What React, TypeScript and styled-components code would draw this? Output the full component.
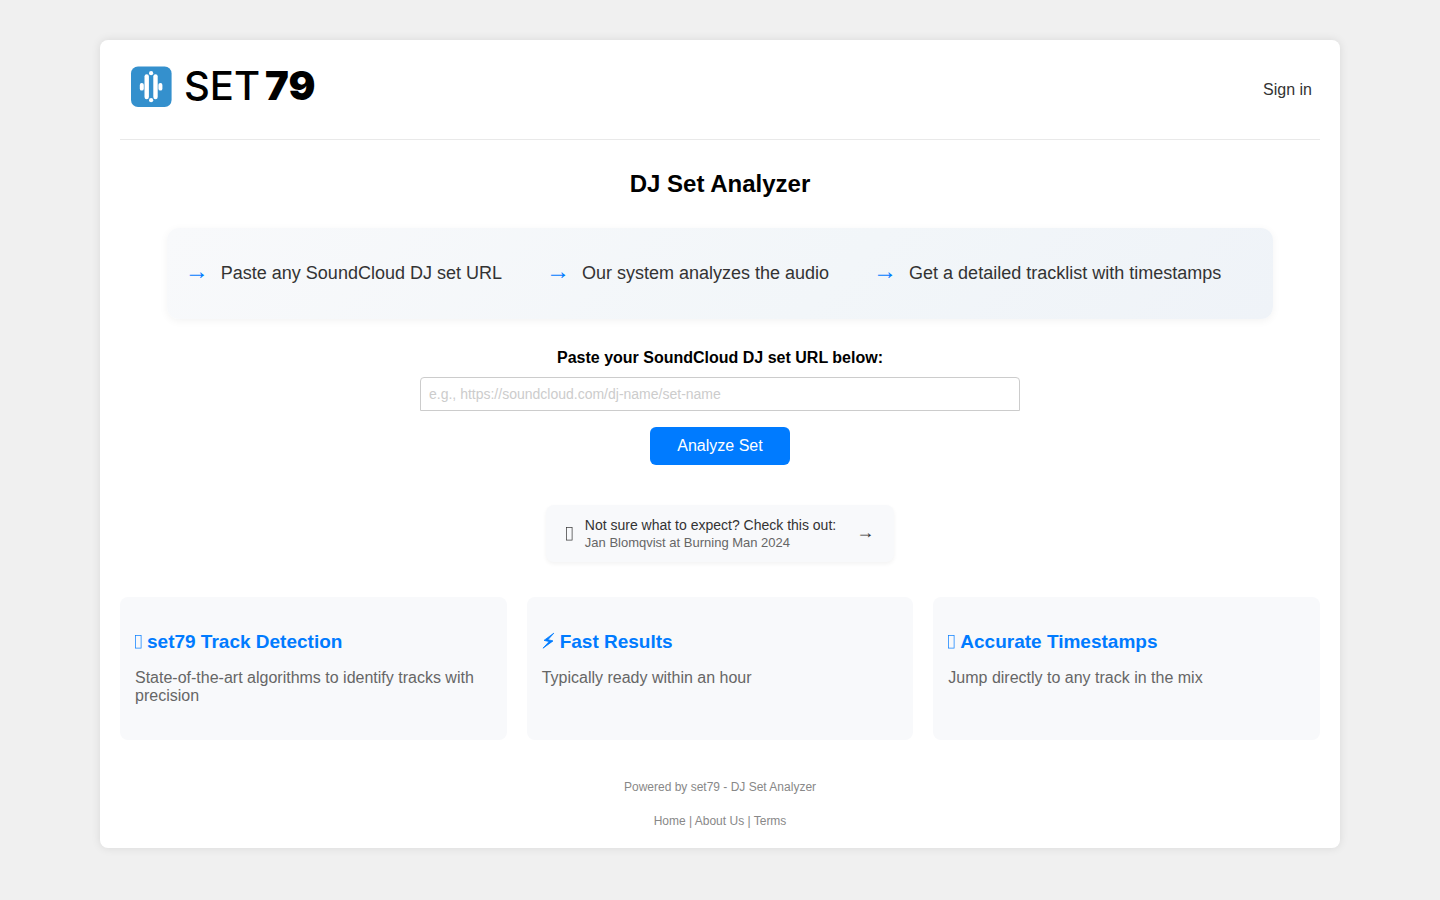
import React from "react";
import styled, { createGlobalStyle } from "styled-components";

const GlobalStyle = createGlobalStyle`
  * { box-sizing: border-box; }
  body {
    margin: 0;
    background: #f0f0f0;
    color: #000;
    font-family: "Liberation Sans", Arial, sans-serif;
    font-size: 16px;
    line-height: 18px;
  }
`;

const Page = styled.div`
  padding: 40px 20px;
`;

const Container = styled.div`
  max-width: 1240px;
  margin: 0 auto;
  padding: 20px;
  background: #fff;
  border-radius: 8px;
  box-shadow: 0 0 10px rgba(0, 0, 0, 0.1);
`;

const Header = styled.header`
  display: flex;
  align-items: center;
  justify-content: space-between;
  height: 80px;
  padding: 0 8px 20px;
  border-bottom: 1px solid #e9e9e9;
`;

const LogoLink = styled.a`
  display: flex;
  align-items: center;
  gap: 12px;
  height: 54px;
  padding: 0 2px;
  margin-bottom: 6px;
  color: #000;
  text-decoration: none;
`;

const LogoMark = styled.svg`
  width: 42px;
  height: 42px;
`;

const Wordmark = styled.span`
  display: flex;
  gap: 5px;
  padding-bottom: 2px;
  font-family: Inter, sans-serif;
  font-size: 40px;
  line-height: 40px;
  font-weight: 500;
  font-optical-sizing: none;

  strong { font-weight: 900; }
`;

const SignIn = styled.a`
  color: #333;
  text-decoration: none;
`;

const Title = styled.h1`
  margin: 30px 0;
  font-size: 24px;
  line-height: 28px;
  text-align: center;
`;

const Steps = styled.ul`
  display: flex;
  flex-wrap: wrap;
  gap: 16px 44px;
  width: fit-content;
  margin: 0 auto 30px;
  padding: 29px 52px 31px 18px;
  list-style: none;
  border-radius: 12px;
  background: linear-gradient(135deg, #f8f9fb 0%, #f2f6f9 60%, #eff3f8 100%);
  box-shadow: 0 2px 8px rgba(0, 0, 0, 0.05);
`;

const Step = styled.li`
  display: flex;
  align-items: center;
  gap: 12px;
  height: 31px;
  color: #333;
  font-size: 18px;
`;

const StepArrow = styled.span`
  padding-bottom: 4px;
  color: #007bff;
  font-size: 24px;
`;

const Form = styled.form`
  display: flex;
  flex-direction: column;
  align-items: center;
`;

const UrlLabel = styled.label`
  margin-bottom: 10px;
  font-weight: bold;
`;

const UrlInput = styled.input`
  width: 100%;
  max-width: 600px;
  height: 34px;
  margin-bottom: 16px;
  padding: 8px;
  border: 1px solid #ccc;
  border-radius: 4px 4px 0 0;
  font-family: inherit;
  font-size: 14px;

  &::placeholder { color: #ccc; }
`;

const SubmitButton = styled.button`
  width: 140px;
  height: 38px;
  padding: 0;
  border: 0;
  border-radius: 6px;
  background: #007bff;
  color: #fff;
  font-family: inherit;
  font-size: 16px;
  cursor: pointer;
`;

const ExampleLink = styled.a`
  display: flex;
  align-items: center;
  width: fit-content;
  margin: 40px auto 35px;
  padding: 11px 20px 10px;
  border-radius: 8px;
  background: #f8f9fb;
  box-shadow: 0 2px 4px rgba(0, 0, 0, 0.05);
  color: #333;
  text-decoration: none;
`;

const ExampleText = styled.span`
  display: flex;
  flex-direction: column;
  margin: 0 20px 0 12px;
  font-size: 14px;

  small {
    color: #666;
    font-size: 13px;
  }
`;

const ExampleArrow = styled.span`
  height: 22px;
  font-size: 18px;
`;

const Features = styled.section`
  display: grid;
  grid-template-columns: repeat(auto-fit, minmax(250px, 1fr));
  gap: 20px;
`;

const Feature = styled.article`
  min-height: 143px;
  padding: 34px 15px;
  border-radius: 8px;
  background: #f8f9fb;
`;

const FeatureTitle = styled.h2`
  display: flex;
  align-items: center;
  gap: 5px;
  margin: 0 0 16px;
  color: #007bff;
  font-size: 19px;
  line-height: 22px;
`;

const FeatureText = styled.p`
  margin: 0;
  color: #666;
`;

const Footer = styled.footer`
  margin-top: 40px;
  color: #888;
  font-size: 12px;
  line-height: 14px;
  text-align: center;

  p { margin: 0; }
  nav { margin-top: 20px; }
  a { color: inherit; text-decoration: none; }
`;

const BoxIcon = () => (
  <svg width="7" height="14" viewBox="0 0 7 14" aria-hidden="true">
    <rect x="0.5" y="0.5" width="5.6" height="12.6" fill="none" stroke="currentColor" strokeWidth="0.7" />
  </svg>
);

const BoltIcon = () => (
  <svg width="13" height="20" viewBox="0 0 13 20" aria-hidden="true">
    <path
      d="M11.8 1.2 L2 8.4 L7.2 9.5 L1 16.2 L11 8.9 L5.9 7.7 Z"
      fill="currentColor"
      stroke="currentColor"
      strokeWidth="0.8"
    />
  </svg>
);

const steps = [
  "Paste any SoundCloud DJ set URL",
  "Our system analyzes the audio",
  "Get a detailed tracklist with timestamps",
];

const features = [
  { Icon: BoxIcon, title: "set79 Track Detection", text: "State-of-the-art algorithms to identify tracks with precision" },
  { Icon: BoltIcon, title: "Fast Results", text: "Typically ready within an hour" },
  { Icon: BoxIcon, title: "Accurate Timestamps", text: "Jump directly to any track in the mix" },
];

export default function App() {
  return (
    <>
      <GlobalStyle />
      <Page>
        <Container>
          <Header>
            <LogoLink href="#home">
              <LogoMark viewBox="0 0 42 42" aria-hidden="true">
                <rect x="1" y="0.5" width="40.6" height="40.6" rx="7" fill="#3490cd" />
                <g fill="#fff">
                  <rect x="14.5" y="8.3" width="4.4" height="25" rx="2.2" />
                  <rect x="23.3" y="8.3" width="4.4" height="25" rx="2.2" />
                  <rect x="9.8" y="17" width="4" height="7.6" rx="1.9" />
                  <rect x="28.4" y="17" width="4" height="7.6" rx="1.9" />
                  <circle cx="21.1" cy="7.2" r="2.1" />
                  <circle cx="21.1" cy="34.2" r="2.1" />
                </g>
              </LogoMark>
              <Wordmark>SET<strong>79</strong></Wordmark>
            </LogoLink>
            <SignIn href="#sign-in">Sign in</SignIn>
          </Header>

          <main>
            <Title>DJ Set Analyzer</Title>
            <Steps>
              {steps.map((step) => (
                <Step key={step}>
                  <StepArrow aria-hidden="true">→</StepArrow>
                  {step}
                </Step>
              ))}
            </Steps>

            <Form onSubmit={(event) => event.preventDefault()}>
              <UrlLabel htmlFor="set-url">Paste your SoundCloud DJ set URL below:</UrlLabel>
              <UrlInput id="set-url" type="url" placeholder="e.g., https://soundcloud.com/dj-name/set-name" />
              <SubmitButton type="submit">Analyze Set</SubmitButton>
            </Form>

            <ExampleLink href="#example">
              <BoxIcon />
              <ExampleText>
                Not sure what to expect? Check this out:
                <small>Jan Blomqvist at Burning Man 2024</small>
              </ExampleText>
              <ExampleArrow aria-hidden="true">→</ExampleArrow>
            </ExampleLink>

            <Features>
              {features.map(({ Icon, title, text }) => (
                <Feature key={title}>
                  <FeatureTitle>
                    <Icon />
                    {title}
                  </FeatureTitle>
                  <FeatureText>{text}</FeatureText>
                </Feature>
              ))}
            </Features>
          </main>

          <Footer>
            <p>Powered by set79 - DJ Set Analyzer</p>
            <nav>
              <a href="#home">Home</a> | <a href="#about">About Us</a> | <a href="#terms">Terms</a>
            </nav>
          </Footer>
        </Container>
      </Page>
    </>
  );
}
